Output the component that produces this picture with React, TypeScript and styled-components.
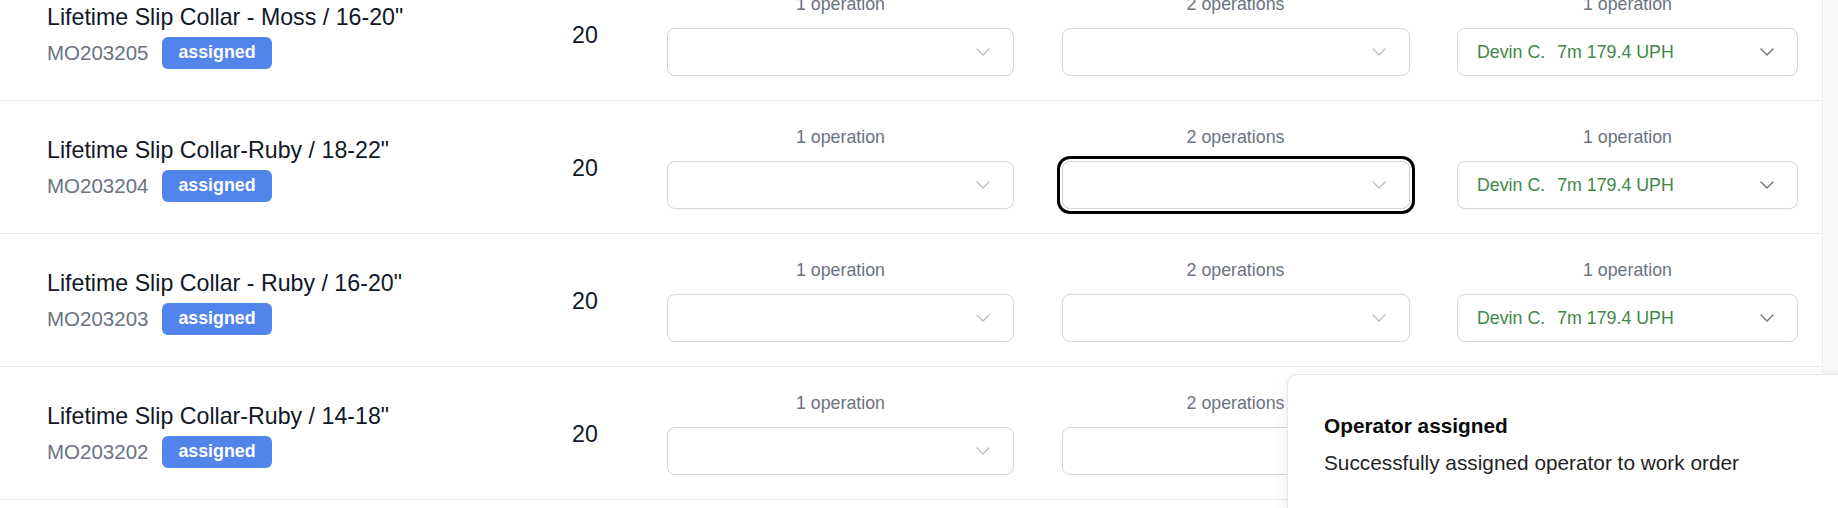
import React from 'react'
import styled, { createGlobalStyle } from 'styled-components'

const GlobalStyle = createGlobalStyle`
    html, body {
        margin: 0;
        padding: 0;
        height: 100%;
        overflow: hidden;
        background: #ffffff;
    }
    body {
        font-family: 'Liberation Sans', Arial, Helvetica, sans-serif;
        color: #111827;
    }
`

const Page = styled.div`
    display: flex;
    width: 1838px;
    height: 508px;
    overflow: hidden;
    position: relative;
`

const Table = styled.div`
    flex: 1;
    display: flex;
    flex-direction: column;
    margin-top: -32px;
`

const ScrollTrack = styled.div`
    width: 16px;
    flex-shrink: 0;
    background: #f8f8f8;
    border-left: 1px solid #ebebeb;
`

const Row = styled.div`
    display: flex;
    align-items: center;
    height: 132px;
    padding: 0 24px 0 47px;
    border-bottom: 1px solid #e5e7eb;
    flex-shrink: 0;
`

const Info = styled.div`
    width: 525px;
    display: flex;
    flex-direction: column;
    gap: 6px;
    margin-top: 3px;
`

const Title = styled.div`
    font-size: 23.2px;
    line-height: 28px;
    color: #111827;
    white-space: nowrap;
`

const SubLine = styled.div`
    display: flex;
    align-items: center;
    gap: 14px;
`

const OrderNo = styled.span`
    font-size: 20.5px;
    color: #6b7280;
`

const Badge = styled.span`
    display: inline-flex;
    align-items: center;
    height: 32px;
    padding: 0 16px;
    border-radius: 6px;
    background: #5185ec;
    color: #ffffff;
    font-size: 17.8px;
    font-weight: 700;
`

const Qty = styled.div`
    width: 95px;
    margin-top: 2px;
    font-size: 23.2px;
    color: #111827;
`

const Selects = styled.div`
    display: flex;
    gap: 47.5px;
`

const SelectCell = styled.div<{ $w: number }>`
    width: ${({ $w }) => $w}px;
    display: flex;
    flex-direction: column;
    align-items: stretch;
    gap: 12px;
`

const OpLabel = styled.div`
    text-align: center;
    font-size: 17.8px;
    line-height: 24px;
    color: #6b7280;
`

const SelectBox = styled.div<{ $focused?: boolean; $filled?: boolean }>`
    height: 48px;
    box-sizing: border-box;
    display: flex;
    align-items: center;
    justify-content: space-between;
    padding: 0 23px 0 19px;
    border: 1px solid #d4d4d8;
    border-radius: 8px;
    background: #ffffff;
    color: ${({ $filled }) => ($filled ? '#727272' : '#bdbdbd')};
    box-shadow: ${({ $focused }) => ($focused ? '0 0 0 2px #ffffff, 0 0 0 5px #000000' : 'none')};
`

const Operator = styled.div`
    display: flex;
    gap: 12px;
    font-size: 17.8px;
    color: #3f8747;
    white-space: nowrap;
`

const Toast = styled.div`
    position: absolute;
    left: 1287px;
    top: 374px;
    width: 620px;
    height: 200px;
    box-sizing: border-box;
    padding: 37px 36px;
    background: #ffffff;
    border: 1px solid #e5e7eb;
    border-radius: 10px;
    box-shadow: 0 4px 14px rgba(0, 0, 0, 0.08);
`

const ToastTitle = styled.div`
    font-size: 20.8px;
    line-height: 28px;
    font-weight: 700;
    color: #0a0a0a;
`

const ToastText = styled.div`
    margin-top: 9px;
    font-size: 20.8px;
    line-height: 28px;
    color: #1f1f1f;
`

const Chevron = () => (
    <svg width="14" height="8" viewBox="0 0 14 8" fill="none">
        <path d="M1 1l6 6 6-6" stroke="currentColor" strokeWidth="1.4" strokeLinecap="round" strokeLinejoin="round" />
    </svg>
)

const rows = [
    { title: 'Lifetime Slip Collar - Moss / 16-20"', mo: 'MO203205' },
    { title: 'Lifetime Slip Collar-Ruby / 18-22"', mo: 'MO203204', focus: true },
    { title: 'Lifetime Slip Collar - Ruby / 16-20"', mo: 'MO203203' },
    { title: 'Lifetime Slip Collar-Ruby / 14-18"', mo: 'MO203202' }
]

export default function App() {
    return (
        <Page>
            <GlobalStyle />
            <Table>
                {rows.map(row => (
                    <Row key={row.mo}>
                        <Info>
                            <Title>{row.title}</Title>
                            <SubLine>
                                <OrderNo>{row.mo}</OrderNo>
                                <Badge>assigned</Badge>
                            </SubLine>
                        </Info>
                        <Qty>20</Qty>
                        <Selects>
                            <SelectCell $w={347}>
                                <OpLabel>1 operation</OpLabel>
                                <SelectBox>
                                    <span />
                                    <Chevron />
                                </SelectBox>
                            </SelectCell>
                            <SelectCell $w={348}>
                                <OpLabel>2 operations</OpLabel>
                                <SelectBox $focused={row.focus}>
                                    <span />
                                    <Chevron />
                                </SelectBox>
                            </SelectCell>
                            <SelectCell $w={341}>
                                <OpLabel>1 operation</OpLabel>
                                <SelectBox $filled>
                                    <Operator>
                                        <span>Devin C.</span>
                                        <span>7m 179.4 UPH</span>
                                    </Operator>
                                    <Chevron />
                                </SelectBox>
                            </SelectCell>
                        </Selects>
                    </Row>
                ))}
            </Table>
            <ScrollTrack />
            <Toast>
                <ToastTitle>Operator assigned</ToastTitle>
                <ToastText>Successfully assigned operator to work order</ToastText>
            </Toast>
        </Page>
    )
}
